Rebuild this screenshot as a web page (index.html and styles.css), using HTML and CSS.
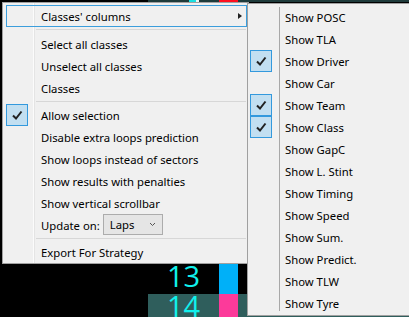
FILE: index.html
```html
<!DOCTYPE html>
<html lang="en">
<head>
    <meta charset="UTF-8">
    <meta name="viewport" content="width=device-width, initial-scale=1.0">
    <title>Timing - context menu</title>
    <link rel="stylesheet" href="styles.css">
</head>
<body>
    <div class="board">
        <div class="strip"></div>
        <div class="hidden-rows"></div>
        <div class="row">
            <div class="pad"></div>
            <div class="num">13</div>
            <div class="bar blue"></div>
            <div class="rest"></div>
        </div>
        <div class="row alt">
            <div class="pad"></div>
            <div class="num">14</div>
            <div class="bar pink"></div>
            <div class="rest"></div>
        </div>
    </div>

    <div class="menu main-menu">
        <div class="item hot">Classes' columns<span class="arrow"></span></div>
        <div class="sep"></div>
        <div class="item">Select all classes</div>
        <div class="item">Unselect all classes</div>
        <div class="item">Classes</div>
        <div class="sep"></div>
        <div class="item checked">
            <span class="check"><svg width="20" height="20" viewBox="0 0 20 20"><path d="M6 10.5l3 3 5.5-7" fill="none" stroke="#222" stroke-width="2"/></svg></span>
            Allow selection
        </div>
        <div class="item">Disable extra loops prediction</div>
        <div class="item">Show loops instead of sectors</div>
        <div class="item">Show results with penalties</div>
        <div class="item">Show vertical scrollbar</div>
        <div class="item">
            Update on:
            <div class="combo">Laps<svg class="chev" width="7" height="5" viewBox="0 0 7 5"><path d="M1 1l2.5 2.5L6 1" fill="none" stroke="#555" stroke-width="1"/></svg></div>
        </div>
        <div class="sep"></div>
        <div class="item">Export For Strategy</div>
    </div>

    <div class="menu sub-menu">
        <div class="item">Show POSC</div>
        <div class="item">Show TLA</div>
        <div class="item checked">
            <span class="check"><svg width="20" height="20" viewBox="0 0 20 20"><path d="M6 10.5l3 3 5.5-7" fill="none" stroke="#222" stroke-width="2"/></svg></span>
            Show Driver
        </div>
        <div class="item">Show Car</div>
        <div class="item checked">
            <span class="check"><svg width="20" height="20" viewBox="0 0 20 20"><path d="M6 10.5l3 3 5.5-7" fill="none" stroke="#222" stroke-width="2"/></svg></span>
            Show Team
        </div>
        <div class="item checked">
            <span class="check"><svg width="20" height="20" viewBox="0 0 20 20"><path d="M6 10.5l3 3 5.5-7" fill="none" stroke="#222" stroke-width="2"/></svg></span>
            Show Class
        </div>
        <div class="item">Show GapC</div>
        <div class="item">Show L. Stint</div>
        <div class="item">Show Timing</div>
        <div class="item">Show Speed</div>
        <div class="item">Show Sum.</div>
        <div class="item">Show Predict.</div>
        <div class="item">Show TLW</div>
        <div class="item">Show Tyre</div>
    </div>
</body>
</html>
```

FILE: styles.css
```css
body {
    margin: 0;
    background: #000;
    overflow: hidden;
    font-family: 'Noto Sans', 'Open Sans', sans-serif;
}

/* timing board behind the menu */
.board {
    width: 409px;
    height: 317px;
    overflow: hidden;
}

.strip {
    height: 2px;
    background: linear-gradient(to right,
        #000 148px, #1f3b3b 148px,
        #1f3b3b 189px, #19e0e0 189px, #19e0e0 196px, #e8f4f4 196px, #e8f4f4 199px, #1f3b3b 199px,
        #1f3b3b 219px, #ff1020 219px, #ff1020 238px, #1f3b3b 238px);
}

.hidden-rows {
    height: 262px;
}

.row {
    display: flex;
    height: 30px;
}

.pad {
    width: 148px;
    background: #000;
}

.num {
    width: 71px;
    text-align: center;
    color: #10f0ec;
    font-family: 'Open Sans', sans-serif;
    font-size: 29px;
    line-height: 23px;
}

.bar {
    width: 19px;
}

.bar.blue {
    background: #00b0f8;
}

.bar.pink {
    background: #fc3a9a;
}

.rest {
    flex: 1;
}

.row.alt .num,
.row.alt .rest {
    background: #2f5e5c;
}

/* context menus */
.menu {
    position: absolute;
    box-sizing: border-box;
    background: #f0f0f0;
    border: 1px solid #a0a0a0;
    font-size: 11.3px;
    color: #000;
}

.main-menu {
    left: 2px;
    top: 2px;
    width: 247px;
    padding: 2px 0 0;
    background:
        linear-gradient(to right, transparent 30px, #fbfbfb 30px, #fbfbfb 31px, #e4e4e4 31px, #e4e4e4 32px, transparent 32px),
        #f0f0f0;
}

.sub-menu {
    left: 247px;
    top: 3px;
    width: 170px;
    padding: 2px 0 1px;
}

.sub-menu::before {
    content: "";
    position: absolute;
    left: 31px;
    top: 3px;
    bottom: 4px;
    width: 1px;
    background: #a8a8a8;
}

.item {
    position: relative;
    display: flex;
    align-items: center;
    box-sizing: border-box;
    height: 22px;
    margin: 0 1px 0 3px;
    padding-left: 34px;
    border: 1px solid transparent;
    white-space: nowrap;
}

.sub-menu .item {
    margin: 0 0 0 2px;
}

.item.hot {
    border-color: #3c9edc;
}

.arrow {
    position: absolute;
    right: 4px;
    top: 7px;
    width: 0;
    height: 0;
    border-top: 3.5px solid transparent;
    border-bottom: 3.5px solid transparent;
    border-left: 4px solid #222;
}

.check {
    position: absolute;
    left: -1px;
    top: -1px;
    width: 22px;
    height: 22px;
    box-sizing: border-box;
    background: #c2dff1;
    border: 1px solid #3399dd;
}

.check svg {
    display: block;
}

.sep {
    height: 5px;
    margin: 0 2px 0 33px;
    background: linear-gradient(#0000 2px, #d7d7d7 2px, #d7d7d7 3px, #0000 3px);
}

.item.hot + .sep {
    height: 6px;
}

.combo {
    position: relative;
    display: flex;
    align-items: center;
    box-sizing: border-box;
    width: 60px;
    height: 21px;
    margin: -1px 0 0 3px;
    padding-left: 6px;
    background: #e5e5e5;
    border: 1px solid #acacac;
}

.chev {
    position: absolute;
    right: 6px;
    top: 7px;
}
```
